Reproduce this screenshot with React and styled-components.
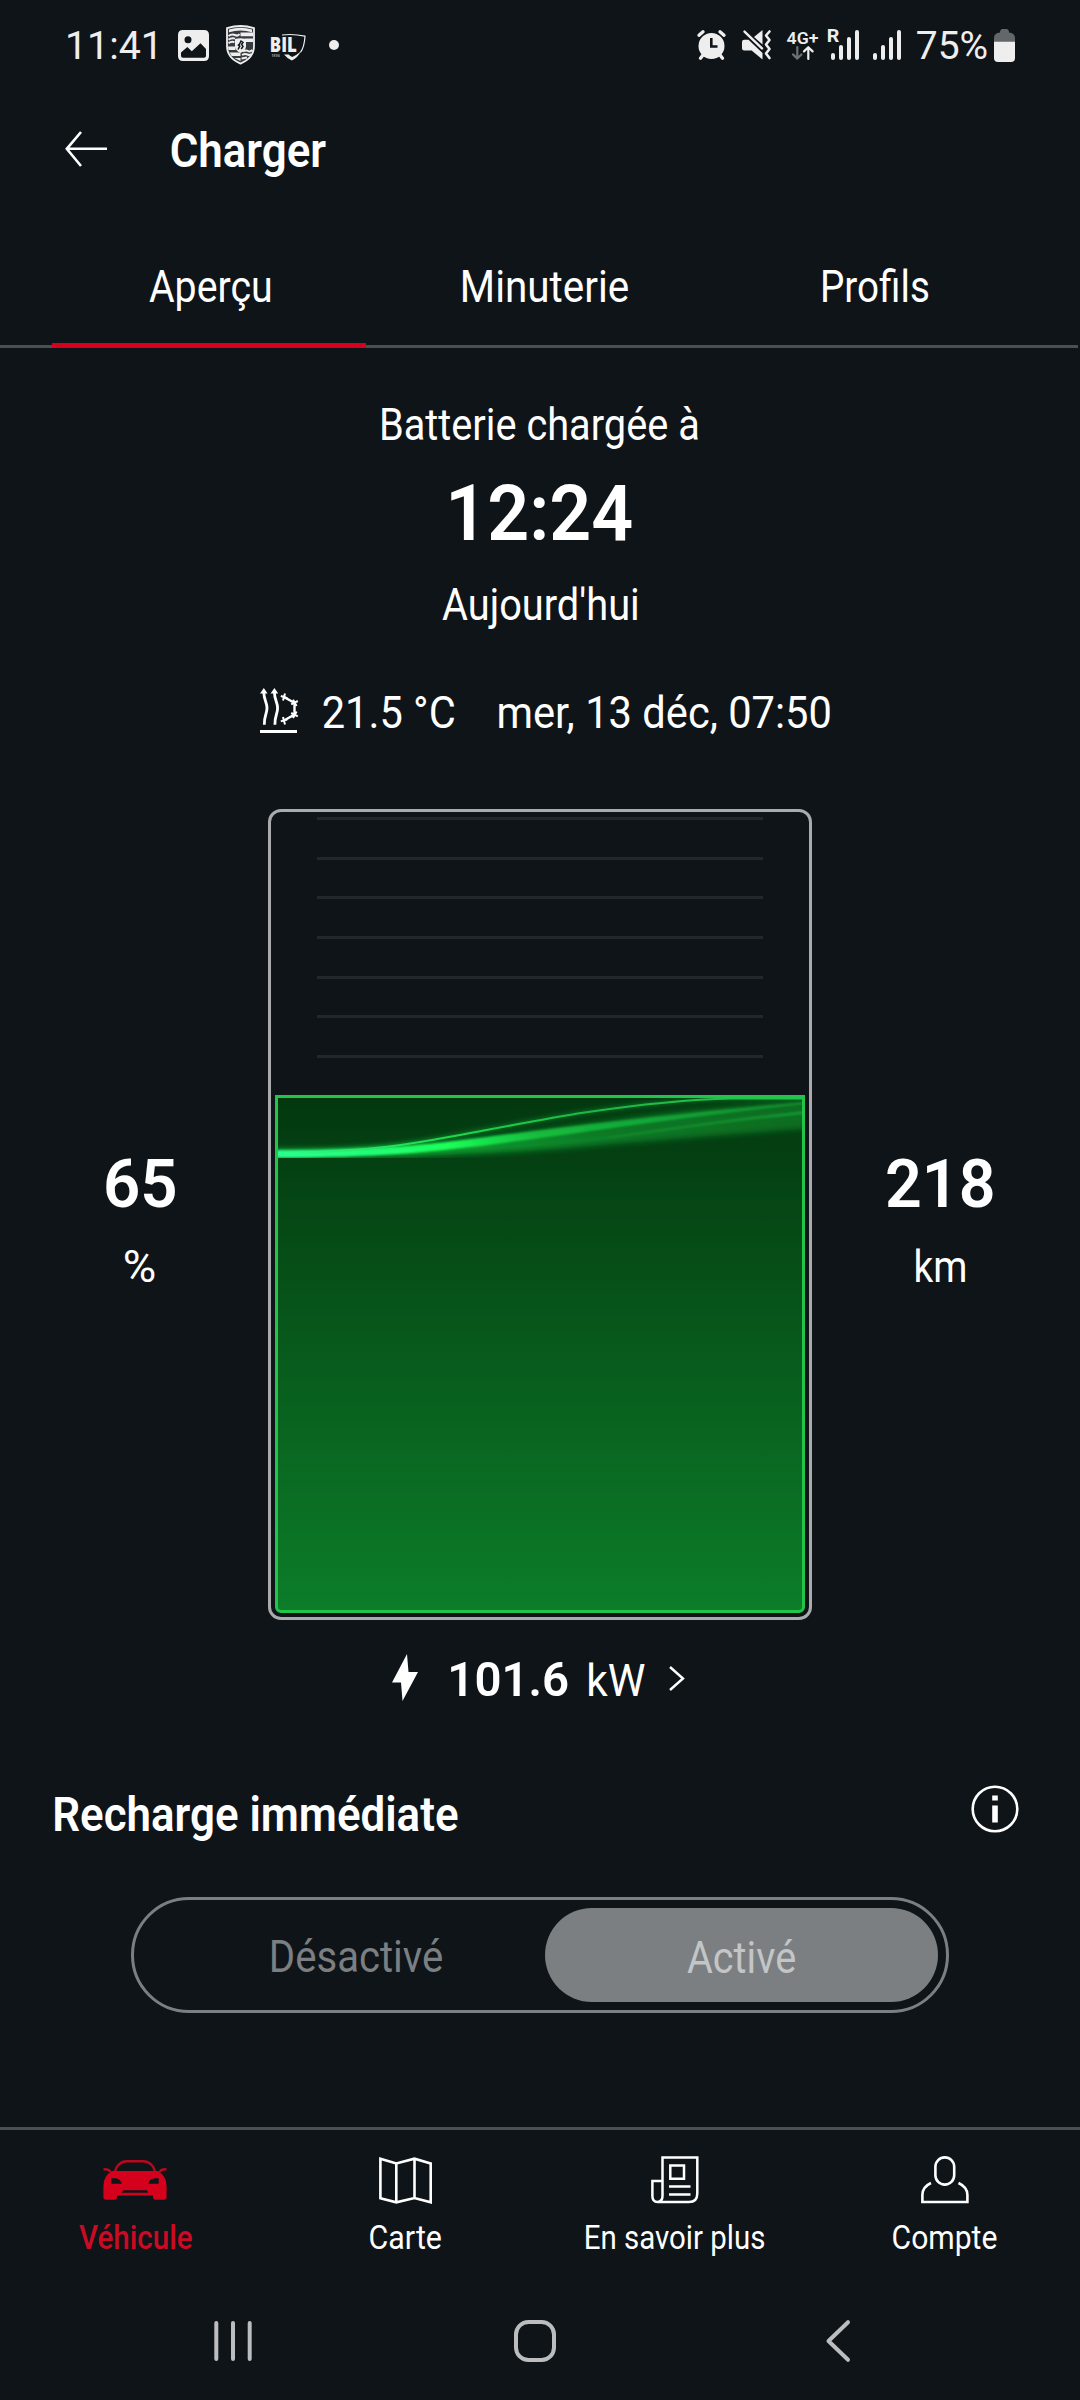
import React, { useMemo } from "react";
import styled, { createGlobalStyle } from "styled-components";

const GlobalStyle = createGlobalStyle`
  * { box-sizing: border-box; }
  html, body { margin: 0; padding: 0; background: #0e1418; }
  body { font-family: Roboto, "Liberation Sans", sans-serif; color: #fff; }
`;

/* ---------- condensed text ---------- */

const LabelBox = styled.span`
  display: block;
  flex: none;
  height: ${(p) => p.$line}px;
  line-height: ${(p) => p.$line}px;
  color: ${(p) => p.$color};
`;

const LabelInk = styled.span`
  display: inline-block;
  white-space: nowrap;
  transform-origin: 0 50%;
  font-family: Roboto, "Liberation Sans", sans-serif;
  font-size: ${(p) => p.$size}px;
  font-weight: ${(p) => p.$weight};
`;

/* Measured at ten times the size, because the canvas rounds glyph bounds to whole pixels. */
let measuring;
function measure(text, size, weight) {
  if (!measuring) measuring = document.createElement("canvas").getContext("2d");
  measuring.font = `${weight} ${size * 10}px Roboto, "Liberation Sans", sans-serif`;
  const m = measuring.measureText(text);
  return {
    left: m.actualBoundingBoxLeft / 10,
    ink: (m.actualBoundingBoxLeft + m.actualBoundingBoxRight) / 10,
  };
}

/* Fits a line of text to a given printed width. */
function Label({ children, width, size = 44.5, weight = 400, line = 60, drop = 1.5, color = "#fff", className }) {
  const fit = useMemo(() => {
    const { left, ink } = measure(children, size, weight);
    const scale = width / ink;
    return { transform: `translate(${left * scale}px, ${drop}px) scaleX(${scale})` };
  }, [children, width, size, weight, drop]);
  return (
    <LabelBox className={className} $line={line} $color={color} style={{ width }}>
      <LabelInk $size={size} $weight={weight} style={fit}>
        {children}
      </LabelInk>
    </LabelBox>
  );
}

/* ---------- page ---------- */

const Screen = styled.div`
  width: 1080px;
  height: 2400px;
  display: flex;
  flex-direction: column;
  background: #0e1418;
  overflow: hidden;
`;

const Icon = styled.svg`
  display: block;
  flex: none;
  overflow: visible;
`;

/* status bar */

const StatusBar = styled.div`
  height: 90px;
  flex: none;
  display: flex;
  justify-content: space-between;
  align-items: center;
  padding: 0 65px 0 68px;
`;

const StatusGroup = styled.div`
  display: flex;
  align-items: center;
`;

const Gap = styled.i`
  flex: none;
  width: ${(p) => p.$w}px;
`;

const Dot = styled.span`
  width: 10px;
  height: 10px;
  border-radius: 50%;
  background: #eee;
`;

const Network = styled.div`
  display: flex;
  flex-direction: column;
  align-items: center;
  width: 31px;
  height: 30px;
`;

/* header + tabs */

const Header = styled.header`
  height: 117px;
  flex: none;
  display: flex;
  align-items: center;
  padding-left: 65px;
`;

const Tabs = styled.nav`
  height: 141px;
  flex: none;
  display: flex;
  padding-left: 52px;
  margin-right: 2px;
  border-bottom: 3px solid #4b4f52;
`;

const Tab = styled.div`
  position: relative;
  width: ${(p) => p.$w}px;
  padding-top: 48px;
  display: flex;
  justify-content: center;
  &::after {
    content: "";
    display: ${(p) => (p.$active ? "block" : "none")};
    position: absolute;
    left: 0;
    right: 0;
    bottom: -3px;
    height: 5px;
    background: #d5001c;
  }
`;

/* charge summary */

const Summary = styled.section`
  display: flex;
  flex-direction: column;
  align-items: center;
  padding-top: 45px;
`;

const Finish = styled.div`
  margin: 19px 0 20px 3px;
`;

const Climate = styled.div`
  display: flex;
  align-items: center;
  margin: 48px 0 68px;
  padding-left: 10px;
`;

const ChargeRow = styled.section`
  display: grid;
  grid-template-columns: 256px 544px 256px;
  padding: 0 12px;
  height: 811px;
`;

const Stat = styled.div`
  display: flex;
  flex-direction: column;
  align-items: center;
  gap: 12px;
  padding-top: 334px;
`;

const Battery = styled.div`
  height: 811px;
  border: 3px solid #a9abad;
  border-radius: 13px;
  padding: 5px 4px 4px;
  display: flex;
  flex-direction: column;
  justify-content: space-between;
`;

const Scale = styled.div`
  margin: 0 42px;
  height: 241px;
  display: flex;
  flex-direction: column;
  justify-content: space-between;
`;

const Tick = styled.div`
  height: 3px;
  background: #22272b;
`;

const Fill = styled.div`
  height: 518px;
  border: 3px solid #22c54a;
  border-radius: 0 0 6px 6px;
  background: linear-gradient(#03380f, #0c7d29);
  overflow: hidden;
`;

const PowerRow = styled.div`
  display: flex;
  align-items: center;
  height: 61px;
  margin-top: 27px;
  padding-left: 392px;
`;

const Unit = styled(Label)`
  margin: 3px 24px 0 21px;
`;

/* immediate charging */

const SectionHead = styled.div`
  display: flex;
  justify-content: space-between;
  align-items: flex-start;
  margin-top: 75px;
  padding: 0 61px 0 55px;
  height: 61px;
`;

const InfoSlot = styled.div`
  padding-top: 1.5px;
`;

const Toggle = styled.div`
  display: flex;
  align-self: center;
  width: 818px;
  height: 116px;
  margin-top: 53px;
  padding: 8px;
  border: 3px solid #7b7f81;
  border-radius: 58px;
`;

const Option = styled.div`
  width: ${(p) => (p.$on ? 393 : 403)}px;
  display: flex;
  justify-content: center;
  align-items: center;
  padding: ${(p) => (p.$on ? "3px 2px 0 0" : "2px 0 0 26px")};
  border-radius: 48px;
  background: ${(p) => (p.$on ? "#7b7f81" : "transparent")};
`;

/* bottom bars */

const BottomNav = styled.nav`
  margin-top: auto;
  flex: none;
  height: 129px;
  border-top: 3px solid #4b4f52;
  display: grid;
  grid-template-columns: repeat(4, 1fr);
`;

const NavItem = styled.div`
  display: flex;
  flex-direction: column;
  align-items: center;
  gap: 12px;
  padding-top: 26px;
`;

const IconSlot = styled.div`
  height: 48px;
  display: flex;
  align-items: center;
`;

const SystemBar = styled.div`
  flex: none;
  height: 144px;
  display: flex;
  align-items: flex-start;
  padding: 64px 0 0 214px;
`;

/* ---------- status icons ---------- */

const ink = "#eee";

const PictureIcon = () => (
  <Icon width="31" height="31" viewBox="0 0 31 31">
    <path
      fill={ink}
      fillRule="evenodd"
      d="M5 0H26Q31 0 31 5V26Q31 31 26 31H5Q0 31 0 26V5Q0 0 5 0ZM10 6.2a3.5 3.5 0 1 0 0 7a3.5 3.5 0 1 0 0-7ZM3 22.5V26Q3 27.7 5 27.7H26Q28 27.7 28 26V19L22.5 13.3L13.8 21.3L9.3 17Z"
    />
  </Icon>
);

const CrestIcon = () => (
  <Icon width="29" height="40" viewBox="0 0 29 40">
    <path fill={ink} fillOpacity="0.18" stroke={ink} strokeWidth="1.8" d="M1 3.2Q14.5 -1.2 28 3.2V21Q28 33 14.5 38.6Q1 33 1 21Z" />
    <path fill={ink} d="M3 4.6Q14.5 1 26 4.6V7.2Q14.5 3.8 3 7.2Z" />
    <path stroke={ink} strokeWidth="2" fill="none" d="M2.500 11Q6 8.4 9 10T13.500 9M2.500 14.600Q6 12.400 9 13.600M2.500 18.200Q5.500 16.200 8.500 17.200M17 26.500Q20 24.800 22 26T26.500 25M16 30Q19 28.300 21.500 29.500T25 28.800M15.500 33.600L21 32.600" />
    <path fill={ink} d="M14.500 7.500H27V11.200H14.500ZM19 13.500H27V17H20ZM2 21.500H9.500V25H2.500ZM3.600 27.500H14.500V31H5.600ZM8.500 33H14.500V36Z" />
    <path fill={ink} d="M9 14Q14.500 12.400 20 14V21.500Q19.500 25.500 14.500 28Q9.500 25.500 9 21.500Z" />
    <path fill="none" stroke="#0e1418" strokeWidth="1.500" d="M12 24.500L13.800 21.200L11.800 19.600M13.200 19.800L15 16L17 17.400L15.600 19.200L17 21.400L15.200 24" />
  </Icon>
);

const BilText = styled.text`
  font-family: "Open Sans", "Noto Sans", Roboto, sans-serif;
  font-weight: 800;
  font-size: ${(p) => p.$size}px;
  fill: #eee;
`;

const BilSlot = styled.div`
  padding-top: 4px;
`;

const BilIcon = () => (
  <Icon width="35" height="27" viewBox="0 0 35 27">
    <BilText $size={20.5} x="-1.2" y="17.8" textLength="27" lengthAdjust="spacingAndGlyphs">BIL</BilText>
    <BilText $size={3.6} x="0.4" y="22.8" textLength="8.5" opacity="0.5">1894</BilText>
    <path fill="none" stroke={ink} strokeWidth="1.2" d="M11 1Q22 -0.4 34 2.2Q33.4 13 29.4 18.4" />
    <path fill={ink} d="M29.8 17.6Q26.6 24 20.8 26.6Q16.5 24.8 13 20.6H17.6Q19.4 22.6 21.2 23Q25.4 21.4 29.8 17.6Z" />
  </Icon>
);

const AlarmIcon = () => (
  <Icon width="29" height="30" viewBox="0 0 29 30">
    <circle cx="14.5" cy="16" r="13" fill={ink} />
    <path stroke={ink} strokeWidth="3.4" strokeLinecap="round" d="M2 5.2L6 1.8M27 5.2L23 1.8M6 25L3.5 28.2M23 25L25.5 28.2" />
    <path fill="none" stroke="#0e1418" strokeWidth="2.6" d="M14.3 8V16.5H20.5" />
  </Icon>
);

const MuteIcon = () => (
  <Icon width="29" height="30" viewBox="0 0 29 30">
    <path fill={ink} d="M0 12Q0 9.8 2.2 9.8H6.5L20.5 23V29.5L9.6 20.4H2.2Q0 20.4 0 18.2ZM12 7L20.5 0V14.5Z" />
    <path stroke={ink} strokeWidth="2.4" strokeLinecap="round" d="M2.5 1.6L20 18.4" />
    <path fill="none" stroke={ink} strokeWidth="2.6" strokeLinecap="round" strokeLinejoin="round" d="M27.5 1.5L24 5.5L27.5 10L24 14.5L27.5 19L24 23.5L27.5 28" />
  </Icon>
);

const TransferIcon = () => (
  <Icon width="22" height="14" viewBox="0 0 22 14">
    <path fill="none" stroke="#6d7173" strokeWidth="2.2" strokeLinecap="round" strokeLinejoin="round" d="M5.3 1V12.4M1 8.4L5.3 12.6L9.4 8.4" />
    <path fill="none" stroke={ink} strokeWidth="2.2" strokeLinecap="round" strokeLinejoin="round" d="M16.3 13V1.5M12 5.4L16.3 1.2L20.6 5.4" />
  </Icon>
);

const SignalRow = styled.div`
  display: flex;
  align-items: flex-end;
  gap: 4px;
  height: 30px;
`;
const SignalBar = styled.span`
  width: 4px;
  height: ${(p) => p.$h}px;
  border-radius: 2px;
  background: #eee;
`;
const Signal = () => (
  <SignalRow>
    {[7, 15, 23, 30].map((h) => (
      <SignalBar key={h} $h={h} />
    ))}
  </SignalRow>
);

const RoamingSignal = styled.div`
  position: relative;
  padding-left: 3px;
`;
const RoamingMark = styled.div`
  position: absolute;
  left: 0;
  top: -4px;
`;

const BatteryIcon = () => (
  <Icon width="21" height="33" viewBox="0 0 21 33">
    <path fill="#636769" d="M6 3.5Q6 0 8.5 0H12.500Q15 0 15 3.500Q21 4 21 9V13H0V9Q0 4 6 3.500Z" />
    <path fill={ink} d="M0 12.800H21V29Q21 33 17 33H4Q0 33 0 29Z" />
  </Icon>
);

/* ---------- content icons ---------- */

const BackArrow = () => (
  <Icon width="42" height="36" viewBox="0 0 42 36">
    <path fill="none" stroke="#fff" strokeWidth="2.6" d="M16 1L1.800 17.800L16 35M1.800 17.800H42" />
  </Icon>
);

const ClimateIcon = () => (
  <Icon width="38" height="46" viewBox="0 0 38 46">
    <path fill="#fff" d="M3.800 0L7.600 5.500H0ZM14.400 0L18.200 5.500H10.600Z" />
    <path
      fill="none"
      stroke="#fff"
      strokeWidth="2.8"
      d="M3.800 4C3.800 12 7 14 7 20C7 26 4 28 4.300 36.800M14.400 4C14.400 12 17.600 14 17.600 20C17.600 26 14.600 28 14.900 36.800"
    />
    <path fill="none" stroke="#fff" strokeWidth="2.4" d="M24 9L34.500 15V26.500L24 32.500" />
    <path
      stroke="#fff"
      strokeWidth="2"
      d="M20.800 8L27.400 10.200M25 5.400L23 12.400M31.200 16.400L37.800 13M33 11.800L36.600 18M31.200 25L37.800 28.400M33 30L36.600 23.600M20.800 33.400L27.400 31.200M25 36.400L23 29"
    />
    <path stroke="#fff" strokeWidth="3" d="M0 43.500H37" />
  </Icon>
);

const BoltIcon = () => (
  <Icon width="26" height="47" viewBox="0 0 26 47">
    <path fill="#fff" d="M15 0L16.500 18H26L10.500 47L9 28.500H0Z" />
  </Icon>
);

const Chevron = () => (
  <Icon width="16" height="24" viewBox="0 0 16 24">
    <path fill="none" stroke="#fff" strokeWidth="2.4" d="M1 1L14 12.500L1 24" />
  </Icon>
);

const InfoIcon = () => (
  <Icon width="48" height="48" viewBox="0 0 48 48">
    <circle cx="24" cy="24" r="22.300" fill="none" stroke="#fff" strokeWidth="2.600" />
    <path fill="#fff" d="M21.200 10.500H26.800V15.500H21.200ZM21.200 20.500H26.800V37.500H21.200Z" />
  </Icon>
);

const CarIcon = () => (
  <Icon width="64" height="40" viewBox="0 0 64 40">
    <path fill="none" stroke="#b8081f" strokeWidth="2.400" d="M12 11.500C13 6 17.500 1.200 24 1.200H40C46.500 1.200 51 6 52 11.500" />
    <path fill="none" stroke="#d5001c" strokeWidth="2.400" d="M0.500 9.400H4Q6.200 9.600 7.400 12M63.500 9.400H60Q57.800 9.600 56.600 12" />
    <path
      fill="#d5001c"
      fillRule="evenodd"
      d="M9 11H55Q63.600 16 63.600 26V37Q63.600 39.700 61 39.700H52.500Q50 39.700 50 37V35.500H14V37Q14 39.700 11.500 39.700H3Q0.400 39.700 0.400 37V26Q0.400 16 9 11ZM8.300 18.300V23.700H18.800Q17.500 19.300 13 18.300ZM55.700 18.300V23.700H45.200Q46.500 19.300 51 18.300ZM20 30.200L18.800 32.800H45.200L44 30.200Z"
    />
  </Icon>
);

const MapIcon = () => (
  <Icon width="53" height="47" viewBox="0 0 53 47">
    <path
      fill="none"
      stroke="#fff"
      strokeWidth="2.600"
      d="M1.400 1.700L17.300 6.500L35.500 1.700L51.700 6.500V45.300L35.500 41L17.300 45.300L1.400 41.300ZM17.300 6.500V45.300M35.500 1.700V41"
    />
  </Icon>
);

const NewsIcon = () => (
  <Icon width="48" height="48" viewBox="0 0 48 48">
    <path
      fill="none"
      stroke="#fff"
      strokeWidth="2.500"
      d="M11.500 40V1.400H46.300V37.500Q46.300 46 38 46H6.500Q11.500 45.500 11.500 40M11.500 25H1.400V40Q1.400 46 6.500 46M19.300 9.400H33V22.700H19.300ZM18 30.500H39.500M18 38.500H39.500"
    />
  </Icon>
);

const PersonIcon = () => (
  <Icon width="48" height="48" viewBox="0 0 48 48">
    <rect x="14.400" y="1.400" width="18.800" height="27.200" rx="9.400" fill="none" stroke="#fff" strokeWidth="2.600" />
    <path fill="none" stroke="#fff" strokeWidth="2.600" d="M10 27C4.500 29.500 1.400 34 1.400 39V46H46.400V39C46.400 34 43 29.500 37.500 27" />
  </Icon>
);

const sys = "#bbbdbe";

const RecentsIcon = () => (
  <Icon width="38" height="42" viewBox="0 0 38 42">
    <path stroke={sys} strokeWidth="4" strokeLinecap="round" d="M2.300 3V39M19 3V39M35.700 3V39" />
  </Icon>
);
const HomeIcon = () => (
  <Icon width="42" height="42" viewBox="0 0 42 42">
    <rect x="2" y="2" width="38" height="38" rx="12.500" fill="none" stroke={sys} strokeWidth="4" />
  </Icon>
);
const PreviousIcon = () => (
  <Icon width="24" height="42" viewBox="0 0 24 42">
    <path fill="none" stroke={sys} strokeWidth="4" strokeLinecap="round" strokeLinejoin="round" d="M22 2.200L2.500 21L22 39.800" />
  </Icon>
);

/* ---------- light trails on top of the charge level ---------- */

const WaveSvg = styled.svg`
  display: block;
  overflow: hidden;
`;

const Wave = () => (
  <WaveSvg width="524" height="60" viewBox="0 0 524 60">
    <defs>
      <linearGradient id="haze" x1="0" x2="1" y1="0" y2="0">
        <stop offset="0" stopColor="#1fff55" stopOpacity="0.700" />
        <stop offset="0.300" stopColor="#17d843" stopOpacity="0.650" />
        <stop offset="0.600" stopColor="#12a835" stopOpacity="0.550" />
        <stop offset="1" stopColor="#108a2e" stopOpacity="0.600" />
      </linearGradient>
      <linearGradient id="core" x1="0" x2="1" y1="0" y2="0">
        <stop offset="0" stopColor="#2cff90" />
        <stop offset="0.180" stopColor="#24ff7c" />
        <stop offset="0.320" stopColor="#1cff58" />
        <stop offset="0.480" stopColor="#18d848" stopOpacity="0.700" />
        <stop offset="1" stopColor="#18b840" stopOpacity="0.450" />
      </linearGradient>
      <linearGradient id="thread" x1="0" x2="1" y1="0" y2="0">
        <stop offset="0" stopColor="#2cff90" />
        <stop offset="0.250" stopColor="#20e050" />
        <stop offset="0.600" stopColor="#1fb844" />
        <stop offset="1" stopColor="#22c54a" />
      </linearGradient>
      <linearGradient id="streak" x1="0" x2="1" y1="0" y2="0">
        <stop offset="0.300" stopColor="#16a83a" stopOpacity="0" />
        <stop offset="1" stopColor="#16a83a" stopOpacity="0.700" />
      </linearGradient>
      <filter id="soft3" x="-10%" y="-50%" width="120%" height="200%"><feGaussianBlur stdDeviation="3" /></filter>
      <filter id="soft1" x="-10%" y="-50%" width="120%" height="200%"><feGaussianBlur stdDeviation="0.900" /></filter>
      <filter id="softThread" filterUnits="userSpaceOnUse" x="-20" y="-20" width="600" height="100"><feGaussianBlur stdDeviation="0.500" /></filter>
      <filter id="softGlow" filterUnits="userSpaceOnUse" x="-20" y="-20" width="600" height="100"><feGaussianBlur stdDeviation="2" /></filter>
    </defs>
    <path fill="url(#haze)" filter="url(#soft3)" d="M-20 52C110 52 180 45 280 30S440 8 560 1V28C460 36 380 42 300 49S100 60 -20 60Z" />
    <path fill="none" stroke="url(#streak)" strokeWidth="3" filter="url(#soft1)" d="M60 56C200 54 290 45 342 38S460 20 540 13.500" />
    <path fill="url(#core)" filter="url(#soft1)" d="M-10 52.500C100 52.500 150 47 220 37.500S440 11 550 2V4.500C440 14 330 31 240 43S100 59 -10 59.500Z" />
    <path fill="none" stroke="url(#thread)" strokeWidth="5" strokeOpacity="0.300" filter="url(#softGlow)" d="M0 55C83 54 120 48 157 41.500S270 20 305 14.800S400 1.500 453 0.500H524" />
    <path fill="none" stroke="url(#thread)" strokeWidth="2" filter="url(#softThread)" d="M0 55C83 54 120 48 157 41.500S270 20 305 14.800S400 1.500 453 0.500H524" />
  </WaveSvg>
);

/* ---------- app ---------- */

const NAV = [
  { label: "Véhicule", width: 113, icon: <CarIcon />, color: "#cb0a23", weight: 500 },
  { label: "Carte", width: 71, icon: <MapIcon /> },
  { label: "En savoir plus", width: 178, icon: <NewsIcon /> },
  { label: "Compte", width: 103.5, icon: <PersonIcon /> },
];

export default function App() {
  return (
    <>
      <GlobalStyle />
      <Screen>
        <StatusBar>
          <StatusGroup>
            <Label size={39.5} width={87} drop={0.5} color={ink}>11:41</Label>
            <Gap $w={23} />
            <PictureIcon />
            <Gap $w={17} />
            <CrestIcon />
            <Gap $w={16} />
            <BilSlot><BilIcon /></BilSlot>
            <Gap $w={23} />
            <Dot />
          </StatusGroup>
          <StatusGroup>
            <AlarmIcon />
            <Gap $w={16} />
            <MuteIcon />
            <Gap $w={16} />
            <Network>
              <Label size={16.5} width={31} weight={600} line={16} drop={0.5} color={ink}>4G+</Label>
              <TransferIcon />
            </Network>
            <Gap $w={10} />
            <RoamingSignal>
              <Signal />
              <RoamingMark>
                <Label size={18} width={11} weight={700} line={20} drop={0} color={ink}>R</Label>
              </RoamingMark>
            </RoamingSignal>
            <Gap $w={14} />
            <Signal />
            <Gap $w={16} />
            <Label size={39.5} width={70} drop={0.5} color={ink}>75%</Label>
            <Gap $w={7} />
            <BatteryIcon />
          </StatusGroup>
        </StatusBar>

        <Header>
          <BackArrow />
          <Gap $w={64} />
          <Label size={48.5} weight={600} width={155}>Charger</Label>
        </Header>

        <Tabs>
          <Tab $w={314} $active><Label width={121}>Aperçu</Label></Tab>
          <Tab $w={359}><Label width={165}>Minuterie</Label></Tab>
          <Tab $w={301}><Label width={105}>Profils</Label></Tab>
        </Tabs>

        <Summary>
          <Label width={316}>Batterie chargée à</Label>
          <Finish><Label size={77} weight={600} width={180.5} line={81} drop={2}>12:24</Label></Finish>
          <Label width={195.5}>Aujourd'hui</Label>
          <Climate>
            <ClimateIcon />
            <Gap $w={25} />
            <Label width={131}>21.5 °C</Label>
            <Gap $w={45} />
            <Label width={331}>mer, 13 déc, 07:50</Label>
          </Climate>
        </Summary>

        <ChargeRow>
          <Stat>
            <Label size={66} weight={600} width={69} line={80}>65</Label>
            <Label width={30}>%</Label>
          </Stat>
          <Battery>
            <Scale>
              {[...Array(7).keys()].map((i) => <Tick key={i} />)}
            </Scale>
            <Fill><Wave /></Fill>
          </Battery>
          <Stat>
            <Label size={66} weight={600} width={106} line={80}>218</Label>
            <Label width={49}>km</Label>
          </Stat>
        </ChargeRow>

        <PowerRow>
          <BoltIcon />
          <Gap $w={33} />
          <Label size={49} weight={600} width={117}>101.6</Label>
          <Unit width={56}>kW</Unit>
          <Chevron />
        </PowerRow>

        <SectionHead>
          <Label size={49} weight={600} width={402.500}>Recharge immédiate</Label>
          <InfoSlot><InfoIcon /></InfoSlot>
        </SectionHead>

        <Toggle>
          <Option><Label width={170} drop={0.5} color="#7b7f81">Désactivé</Label></Option>
          <Option $on><Label width={108} drop={0.5} color="#c3c5c6">Activé</Label></Option>
        </Toggle>

        <BottomNav>
          {NAV.map((n) => (
            <NavItem key={n.label}>
              <IconSlot>{n.icon}</IconSlot>
              <Label size={33.500} line={40} width={n.width} color={n.color} weight={n.weight}>{n.label}</Label>
            </NavItem>
          ))}
        </BottomNav>

        <SystemBar>
          <RecentsIcon />
          <Gap $w={262} />
          <HomeIcon />
          <Gap $w={270} />
          <PreviousIcon />
        </SystemBar>
      </Screen>
    </>
  );
}
